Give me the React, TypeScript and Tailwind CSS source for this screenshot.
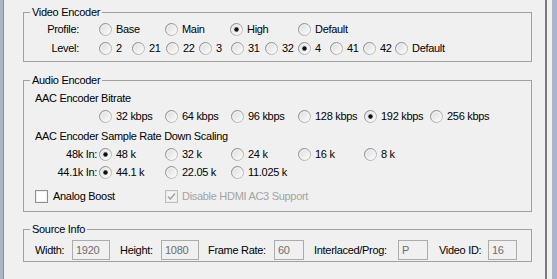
import React from "react";

const font = { fontFamily: '"Liberation Sans", Arial, sans-serif' };

function Radio({ checked }: { checked?: boolean }) {
  return (
    <svg width="13" height="13" viewBox="0 0 13 13" className="shrink-0">
      <defs>
        <linearGradient id="rgo" x1="0" y1="0" x2="1" y2="1">
          <stop offset="0" stopColor="#7d7d7d" />
          <stop offset="1" stopColor="#c9c9c9" />
        </linearGradient>
        <linearGradient id="rgi" x1="0" y1="0" x2="1" y2="1">
          <stop offset="0" stopColor="#d9d9d9" />
          <stop offset="1" stopColor="#ffffff" />
        </linearGradient>
      </defs>
      <circle cx="6.5" cy="6.5" r="6" fill="url(#rgi)" stroke="url(#rgo)" strokeWidth="1" />
      <circle cx="6.5" cy="6.5" r="4.5" fill="none" stroke="#f7f7f7" strokeWidth="1" opacity="0.7" />
      {checked && <circle cx="6.5" cy="6.5" r="2.2" fill="#111111" />}
    </svg>
  );
}

function RadioItem({ label, checked, w }: { label: string; checked?: boolean; w: string }) {
  return (
    <div className={`flex items-center ${w}`}>
      <Radio checked={checked} />
      <span className="ml-[4px] whitespace-nowrap">{label}</span>
    </div>
  );
}

function Check({ checked, disabled }: { checked?: boolean; disabled?: boolean }) {
  return (
    <svg width="13" height="13" viewBox="0 0 13 13" className="shrink-0">
      <rect x="0.5" y="0.5" width="12" height="12" fill={disabled ? "#f4f4f4" : "#ffffff"} stroke={disabled ? "#bdbdbd" : "#8e8f8f"} />
      <rect x="1.5" y="1.5" width="10" height="10" fill="none" stroke={disabled ? "#ececec" : "#f0f0f0"} />
      {checked && (
        <path d="M3 6.5 L5.3 9 L10 3.5" fill="none" stroke={disabled ? "#a6a6a6" : "#222"} strokeWidth="1.6" />
      )}
    </svg>
  );
}

function Group({ title, className, children }: { title: string; className?: string; children: React.ReactNode }) {
  return (
    <div className={`border border-[#a0a0a0] ${className ?? ""}`}>
      <div className="-mt-[7px] ml-[6px] w-fit bg-[#f0f0f0] px-[2px] leading-[13px] whitespace-nowrap">{title}</div>
      {children}
    </div>
  );
}

function Field({ label, value, lw, iw, ml }: { label: string; value: string; lw: string; iw: string; ml: string }) {
  return (
    <div className={`flex items-center ${ml}`}>
      <span className={`${lw} whitespace-nowrap`}>{label}</span>
      <div className={`${iw} h-[20px] border border-[#acacac] bg-[#f0f0f0] pl-[3px] flex items-center text-[#6d6d6d]`}>{value}</div>
    </div>
  );
}

export default function App() {
  return (
    <div className="flex h-[279px] w-[557px] overflow-hidden text-[11px] leading-[13px] tracking-[-0.3px] text-black" style={font}>
      <div className="w-[3px] bg-[#a9b6c3]" />
      <div className="w-[1px] bg-[#8c8f93]" />
      <div className="flex-1 bg-[#f0f0f0] pl-[19px] pr-[13px] pt-[12px]">
        <Group title="Video Encoder" className="pb-[4px]">
          <div className="mt-[1px] flex h-[18px] items-center">
            <span className="w-[55px] text-right">Profile:</span>
            <div className="ml-[20px] flex">
              <RadioItem label="Base" w="w-[66px]" />
              <RadioItem label="Main" w="w-[65px]" />
              <RadioItem label="High" checked w="w-[68px]" />
              <RadioItem label="Default" w="w-[66px]" />
            </div>
          </div>
          <div className="mt-[1px] flex h-[18px] items-center">
            <span className="w-[55px] text-right">Level:</span>
            <div className="ml-[20px] flex">
              <RadioItem label="2" w="w-[33px]" />
              <RadioItem label="21" w="w-[34px]" />
              <RadioItem label="22" w="w-[33px]" />
              <RadioItem label="3" w="w-[32px]" />
              <RadioItem label="31" w="w-[34px]" />
              <RadioItem label="32" w="w-[33px]" />
              <RadioItem label="4" checked w="w-[32px]" />
              <RadioItem label="41" w="w-[33px]" />
              <RadioItem label="42" w="w-[32px]" />
              <RadioItem label="Default" w="w-[60px]" />
            </div>
          </div>
        </Group>

        <Group title="Audio Encoder" className="mt-[18px] pb-[6px]">
          <div className="mt-[2px] flex h-[18px] items-center pl-[11px]">AAC Encoder Bitrate</div>
          <div className="flex h-[18px] items-center pl-[75px]">
            <RadioItem label="32 kbps" w="w-[66px]" />
            <RadioItem label="64 kbps" w="w-[66px]" />
            <RadioItem label="96 kbps" w="w-[67px]" />
            <RadioItem label="128 kbps" w="w-[66px]" />
            <RadioItem label="192 kbps" checked w="w-[66px]" />
            <RadioItem label="256 kbps" w="w-[66px]" />
          </div>
          <div className="mt-[3px] flex h-[17px] items-center pl-[11px]">AAC Encoder Sample Rate Down Scaling</div>
          <div className="flex h-[18px] items-center">
            <span className="w-[73px] text-right">48k In:</span>
            <div className="ml-[2px] flex">
              <RadioItem label="48 k" checked w="w-[66px]" />
              <RadioItem label="32 k" w="w-[66px]" />
              <RadioItem label="24 k" w="w-[67px]" />
              <RadioItem label="16 k" w="w-[66px]" />
              <RadioItem label="8 k" w="w-[66px]" />
            </div>
          </div>
          <div className="flex h-[18px] items-center">
            <span className="w-[73px] text-right">44.1k In:</span>
            <div className="ml-[2px] flex">
              <RadioItem label="44.1 k" checked w="w-[66px]" />
              <RadioItem label="22.05 k" w="w-[66px]" />
              <RadioItem label="11.025 k" w="w-[67px]" />
            </div>
          </div>
          <div className="mt-[6px] flex h-[18px] items-center pl-[11px]">
            <div className="flex w-[130px] items-center">
              <Check />
              <span className="ml-[5px]">Analog Boost</span>
            </div>
            <div className="flex items-center">
              <Check checked disabled />
              <span className="ml-[4px] text-[#a3a3a3]">Disable HDMI AC3 Support</span>
            </div>
          </div>
        </Group>

        <Group title="Source Info" className="mt-[17px] pb-[1px]">
          <div className="mt-[4px] flex h-[20px] items-center pl-[11px]">
            <Field label="Width:" value="1920" lw="w-[37px]" iw="w-[38px]" ml="" />
            <Field label="Height:" value="1080" lw="w-[41px]" iw="w-[38px]" ml="ml-[10px]" />
            <Field label="Frame Rate:" value="60" lw="w-[66px]" iw="w-[30px]" ml="ml-[9px]" />
            <Field label="Interlaced/Prog:" value="P" lw="w-[84px]" iw="w-[30px]" ml="ml-[10px]" />
            <Field label="Video ID:" value="16" lw="w-[49px]" iw="w-[29px]" ml="ml-[11px]" />
          </div>
        </Group>
      </div>
      <div className="w-[2px] bg-[#7a7a7a]" />
      <div className="w-[5px] bg-[#f0f0f0]" />
      <div className="w-[5px] bg-[#a9b6c3]" />
    </div>
  );
}
